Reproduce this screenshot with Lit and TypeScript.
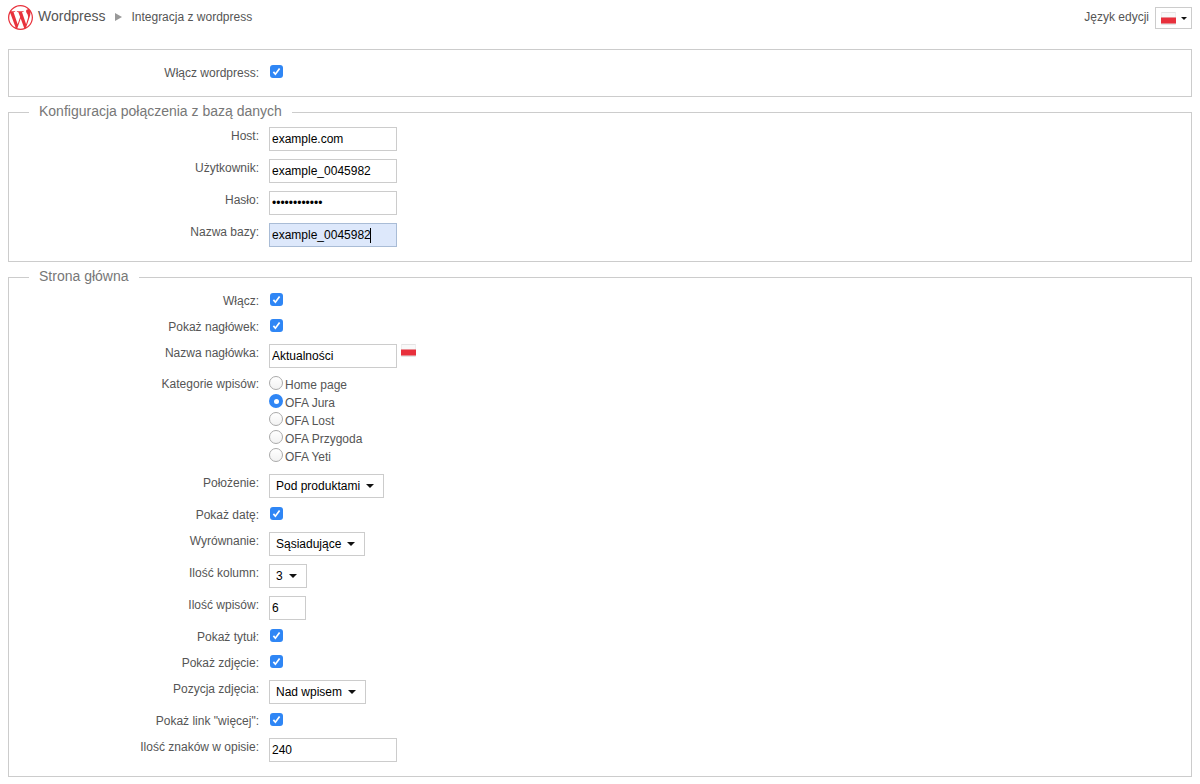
import { LitElement, html, css, svg } from "lit";
import { customElement } from "lit/decorators.js";

const WP = "M21.469 6.825c.84 1.537 1.318 3.3 1.318 5.175 0 3.979-2.156 7.456-5.363 9.325l3.295-9.527c.615-1.54.82-2.771.82-3.864 0-.405-.026-.78-.07-1.11m-7.981.105c.647-.03 1.232-.105 1.232-.105.582-.075.514-.93-.067-.899 0 0-1.755.135-2.88.135-1.064 0-2.85-.15-2.85-.15-.585-.03-.661.855-.075.885 0 0 .54.061 1.125.09l1.68 4.605-2.37 7.08L5.354 6.9c.649-.03 1.234-.1 1.234-.1.585-.075.516-.93-.065-.896 0 0-1.746.138-2.874.138-.2 0-.438-.008-.69-.015C4.911 3.15 8.235 1.215 12 1.215c2.809 0 5.365 1.072 7.286 2.833-.046-.003-.091-.009-.141-.009-1.06 0-1.812.923-1.812 1.914 0 .89.513 1.643 1.06 2.531.411.72.89 1.643.89 2.977 0 .915-.354 1.994-.821 3.479l-1.075 3.585-3.9-11.61.001.014zM12 22.784c-1.059 0-2.081-.153-3.048-.437l3.237-9.406 3.315 9.087c.024.053.05.101.078.149-1.12.393-2.325.609-3.582.609M1.211 12c0-1.564.336-3.05.935-4.39L7.29 21.709C3.694 19.96 1.212 16.271 1.211 12M12 0C5.385 0 0 5.385 0 12s5.385 12 12 12 12-5.385 12-12S18.615 0 12 0";

@customElement("app-root")
export class AppRoot extends LitElement {
  static styles = css`
    :host { display: block; font-family: "Liberation Sans", Arial, sans-serif; font-size: 12px; color: #555; background: #fff; }
    * { box-sizing: border-box; }
    .head { height: 49px; padding: 5px 8px 0; display: flex; align-items: flex-start; }
    .logo { width: 25px; height: 25px; fill: #e8323c; flex: none; display: block; }
    .title { font-size: 14px; line-height: 16px; margin: 3px 0 0 5px; color: #555; }
    .tri { width: 0; height: 0; border-left: 7px solid #999; border-top: 4px solid transparent; border-bottom: 4px solid transparent; margin: 8px 0 0 10px; }
    .crumb { line-height: 16px; margin: 4px 0 0 9px; color: #555; }
    .lang { margin-left: auto; display: flex; align-items: flex-start; }
    .lang span { line-height: 16px; margin: 4px 6px 0 0; color: #555; }
    .langbtn { width: 37px; height: 22px; margin-top: 2px; border: 1px solid #ccc; background: #fff; padding: 0 0 0 5px; display: flex; align-items: center; }
    .flag { display: block; width: 15px; height: 13px; flex: none; }
    .langbtn .caret { margin-left: 5px; border-top-width: 3px; border-left-width: 3px; border-right-width: 3px; }
    .caret { width: 0; height: 0; border-top: 4px solid #111; border-left: 4px solid transparent; border-right: 4px solid transparent; flex: none; }
    fieldset { margin: 0 8px 8px; padding: 3px 0 10px; border: 1px solid #ccc; min-width: 0; display: block; }
    fieldset.plain { padding: 10px 0; margin-bottom: 8px; }
    legend { margin-left: 20px; padding: 0 10px 2px; font-size: 14px; line-height: 13px; color: #777; }
    .row { display: flex; align-items: flex-start; }
    .row.ctl { padding: 4px 0; }
    .row.ctl .lab { margin-top: 1px; }
    .row.chk { height: 26px; padding-top: 2px; }
    .row.rad { padding: 0 0 4px; }
    .lab { width: 250px; margin-right: 10px; text-align: right; line-height: 16px; color: #555; flex: none; }
    .row.chk .lab { margin-top: 3px; }
    .row.rad .lab { margin-top: 4px; }
    .wrap { position: relative; display: block; flex: none; }
    input { display: block; width: 128px; height: 24px; border: 1px solid #ccc; background: #fff; padding: 0 2px; font: 12px "Liberation Sans", Arial, sans-serif; color: #000; outline: none; margin: 0; border-radius: 0; }
    input.short { width: 37px; }
    input.focus { background: #dde8fb; border-color: #a9bcd6; }
    .cursor { position: absolute; left: 101px; top: 5px; width: 1px; height: 15px; background: #000; }
    .cb { width: 13px; height: 13px; margin: 3px 0 0 1px; border-radius: 3px; background: #2f86f5; display: block; flex: none; }
    .cb svg { display: block; }
    .dd { height: 24px; border: 1px solid #ccc; background: #fff; padding: 0 9px 0 6px; font: 12px "Liberation Sans", Arial, sans-serif; color: #000; display: flex; align-items: center; gap: 6px; margin: 0; flex: none; border-radius: 0; }
    .flag2 { margin: 0 0 0 4px; }
    .list { padding-top: 4px; }
    .opt { height: 18px; display: flex; align-items: center; color: #555; line-height: 18px; }
    .radio { width: 14px; height: 14px; border-radius: 50%; border: 1px solid #aaa; background: linear-gradient(#fff, #f2f2f2); flex: none; margin: -4px 2px 0 0; }
    .radio.on { background: #2f86f5; border: none; display: flex; align-items: center; justify-content: center; }
    .radio.on::after { content: ""; width: 5px; height: 5px; border-radius: 50%; background: #fff; }
  `;

  flag(extra = "") {
    return html`<svg class="flag ${extra}" viewBox="0 0 15 13">
      <rect x="0" y="0" width="15" height="13" rx="1" fill="#e4e4e4"/>
      <rect x="0.5" y="1" width="14" height="4.5" fill="#f9f9f9"/>
      <rect x="0" y="5.5" width="15" height="6" fill="#e8303c"/>
    </svg>`;
  }
  chk(label: string) {
    return html`<div class="row chk"><div class="lab">${label}</div>
      <span class="cb"><svg width="13" height="13" viewBox="0 0 13 13">${svg`<path d="M3.4 6.9 5.4 9.2 9.6 3.6" fill="none" stroke="#fff" stroke-width="1.7"/>`}</svg></span></div>`;
  }
  inp(label: string, value: string, opts: { type?: string; cls?: string; after?: unknown; cursor?: boolean } = {}) {
    return html`<div class="row ctl"><div class="lab">${label}</div>
      <span class="wrap"><input class=${opts.cls ?? ""} type=${opts.type ?? "text"} .value=${value} readonly />${opts.cursor ? html`<i class="cursor"></i>` : ""}</span>${opts.after ?? ""}</div>`;
  }
  dd(label: string, value: string) {
    return html`<div class="row ctl"><div class="lab">${label}</div>
      <button class="dd">${value}<i class="caret"></i></button></div>`;
  }
  render() {
    const cats = ["Home page", "OFA Jura", "OFA Lost", "OFA Przygoda", "OFA Yeti"];
    return html`
      <header class="head">
        <svg class="logo" viewBox="0 0 24 24"><path d=${WP}/></svg>
        <div class="title">Wordpress</div>
        <i class="tri"></i>
        <div class="crumb">Integracja z wordpress</div>
        <div class="lang"><span>Język edycji</span>
          <div class="langbtn">${this.flag()}<i class="caret"></i></div></div>
      </header>
      <fieldset class="plain">${this.chk("Włącz wordpress:")}</fieldset>
      <fieldset>
        <legend>Konfiguracja połączenia z bazą danych</legend>
        ${this.inp("Host:", "example.com")}
        ${this.inp("Użytkownik:", "example_0045982")}
        ${this.inp("Hasło:", "aaaaaaaaaaaa", { type: "password" })}
        ${this.inp("Nazwa bazy:", "example_0045982", { cls: "focus", cursor: true })}
      </fieldset>
      <fieldset>
        <legend>Strona główna</legend>
        ${this.chk("Włącz:")}
        ${this.chk("Pokaż nagłówek:")}
        ${this.inp("Nazwa nagłówka:", "Aktualności", { after: this.flag("flag2") })}
        <div class="row rad"><div class="lab">Kategorie wpisów:</div>
          <div class="list">${cats.map((c, i) => html`<div class="opt"><i class="radio ${i === 1 ? "on" : ""}"></i>${c}</div>`)}</div></div>
        ${this.dd("Położenie:", "Pod produktami")}
        ${this.chk("Pokaż datę:")}
        ${this.dd("Wyrównanie:", "Sąsiadujące")}
        ${this.dd("Ilość kolumn:", "3")}
        ${this.inp("Ilość wpisów:", "6", { cls: "short" })}
        ${this.chk("Pokaż tytuł:")}
        ${this.chk("Pokaż zdjęcie:")}
        ${this.dd("Pozycja zdjęcia:", "Nad wpisem")}
        ${this.chk("Pokaż link \"więcej\":")}
        ${this.inp("Ilość znaków w opisie:", "240")}
      </fieldset>
    `;
  }
}
